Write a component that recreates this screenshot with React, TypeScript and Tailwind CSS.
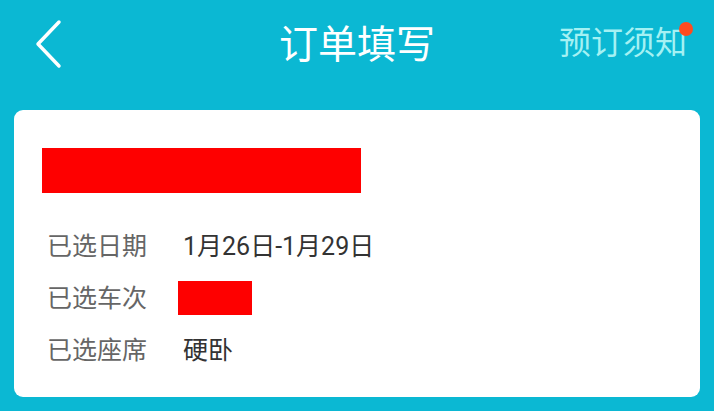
export default function App() {
  return (
    <div
      className="w-[714px] h-[411px] bg-[#0bb8d3] overflow-hidden"
      style={{ fontFamily: 'Roboto, "Noto Sans CJK SC", "Noto Sans", sans-serif' }}
    >
      {/* Header */}
      <div className="relative h-[90px] flex items-center justify-center">
        <svg
          className="absolute left-[33px] top-[19px]"
          width="30"
          height="50"
          viewBox="0 0 30 50"
          fill="none"
        >
          <path
            d="M26 3 L5 25 L26 47"
            stroke="white"
            strokeWidth="3.5"
            strokeLinecap="round"
            strokeLinejoin="round"
          />
        </svg>
        <span className="text-[39px] text-white leading-none">订单填写</span>
        <div className="absolute right-[27px] top-[27px]">
          <span className="text-[32px] leading-none text-[#a4f1f3]">预订须知</span>
          <span className="absolute right-[-6px] top-[-5px] w-[14px] h-[14px] rounded-full bg-[#ff4b1f]" />
        </div>
      </div>

      {/* Card */}
      <div className="mx-[14px] mt-[20px] h-[287px] rounded-[9px] bg-white pl-[28px] pt-[38px]">
        <div className="w-[319px] h-[45px] bg-[#fe0000]" />
        <div className="mt-[27px] flex flex-col text-[25px] leading-none">
          <div className="h-[52px] flex items-center">
            <span className="w-[141px] pl-[5px] text-[#666]">已选日期</span>
            <span className="text-[#333]">1月26日-1月29日</span>
          </div>
          <div className="h-[52px] flex items-center">
            <span className="w-[136px] pl-[5px] text-[#666]">已选车次</span>
            <span className="w-[74px] h-[34px] bg-[#fe0000]" />
          </div>
          <div className="h-[52px] flex items-center">
            <span className="w-[141px] pl-[5px] text-[#666]">已选座席</span>
            <span className="text-[#333]">硬卧</span>
          </div>
        </div>
      </div>
    </div>
  );
}
